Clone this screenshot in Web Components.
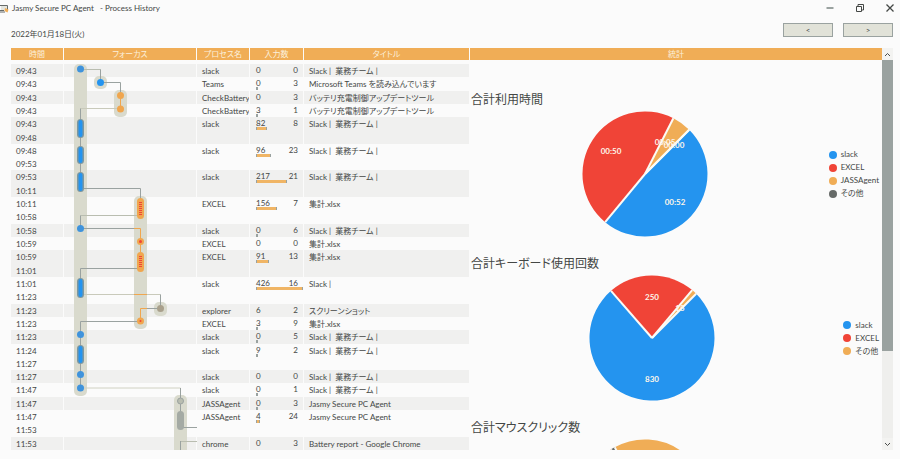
<!DOCTYPE html>
<html lang="ja">
<head>
<meta charset="utf-8">
<title>Jasmy Secure PC Agent - Process History</title>
<style>
html, body { margin: 0; height: 100%; }
body { background: #fbfbfb; color: #444745; font: 8px/14px Lato, "Noto Sans CJK JP", sans-serif; font-feature-settings: "palt"; overflow: hidden; }
</style>
</head>
<body>
<app-window>
  <title-bar slot="title">Jasmy Secure PC Agent &nbsp; - Process History</title-bar>
  <date-bar slot="tools">2022年01月18日(火)</date-bar>
  <history-table></history-table>
  <stats-panel heading="統計">
    <pie-section heading="合計利用時間" slices='[["slack","#2494ef",45,219.6],["EXCEL","#f04437",219.6,387],["JASSAgent","#f0ad56",387,405],["その他","#666a68",405,405]]' labels='[["00:50",29,43],["00:05",83,34],["00:00",92,37],["00:52",93,94]]'></pie-section>
    <pie-section heading="合計キーボード使用回数" slices='[["slack","#2494ef",45,319],["EXCEL","#f04437",319,400],["その他","#f0ad56",400,405]]' labels='[["250",63,25],["15",91,36],["830",63,107]]'></pie-section>
    <pie-section heading="合計マウスクリック数" slices='[["JASSAgent","#f0ad56",-29,100],["slack","#2494ef",100,240],["EXCEL","#f04437",240,327],["その他","#666a68",327,331]]' labels='[]'></pie-section>
  </stats-panel>
  <scroll-rail></scroll-rail>
</app-window>
<script>
const define = (name, html, setup) => customElements.define(name, class extends HTMLElement {
  connectedCallback() {
    if (this.shadowRoot) return;
    const root = this.attachShadow({ mode: "open" });
    const t = document.createElement("template");
    t.innerHTML = typeof html === "function" ? html(this) : html;
    root.append(t.content.cloneNode(true));
    if (setup) setup(this, root);
  }
});

define("app-window", `
<style>
:host { display: flex; flex-direction: column; height: 100vh; }
main { flex: 1; min-height: 0; display: grid; grid-template-columns: auto 1fr 11px; padding: 0 7px 9px 11px; }
</style>
<slot name="title"></slot><slot name="tools"></slot>
<main><slot></slot></main>`);

define("title-bar", `
<style>
:host { display: block; }
header { display: flex; align-items: center; height: 16px; padding-right: 4px; }
.logo { width: 9px; height: 9px; margin-right: 3px; }
h1 { font: inherit; margin: 0; flex: 1; }
nav { display: flex; gap: 18px; }
button { border: 0; background: none; padding: 0; width: 12px; height: 12px; display: grid; place-items: center; color: inherit; }
button svg { width: 10px; height: 10px; fill: none; stroke: currentColor; }
</style>
<header>
<svg class="logo" viewBox="0 0 9 9" aria-hidden="true"><path d="M0 1.5H7.5V6" fill="none" stroke="#666a68"/><path d="M1 2H7V6H1Z" fill="#e4e5de"/><path d="M0 8H5M0 6.5H4" stroke="#666a68"/><path d="M5 4L8.5 5.5L7.5 8.5L4.5 7Z" fill="#f0ad56"/></svg>
<h1><slot></slot></h1>
<nav>
<button aria-label="Minimize"><svg viewBox="0 0 10 10"><path d="M1.5 5H8.5" stroke="#9aa2a0" stroke-width="2"/></svg></button>
<button aria-label="Restore"><svg viewBox="0 0 10 10"><path d="M1.5 3.5H6.5V8.5H1.5ZM3 3V1.5H8.5V7H7"/></svg></button>
<button aria-label="Close"><svg viewBox="0 0 10 10"><path d="M1.5 1.5L8.5 8.5M8.5 1.5L1.5 8.5" stroke-width="1.3"/></svg></button>
</nav>
</header>`);

define("date-bar", `
<style>
:host { display: flex; justify-content: space-between; padding: 7px 7px 7px 11px; }
time { padding-top: 4px; }
div { display: flex; gap: 10px; }
button { box-sizing: border-box; width: 50px; height: 14px; padding: 0; border: 1px solid #9aa2a0; background: #e1e2d8; font: inherit; line-height: 12px; color: inherit; }
</style>
<time datetime="2022-01-18"><slot></slot></time>
<div><button aria-label="Previous day">&lt;</button><button aria-label="Next day">&gt;</button></div>`);

// [start, end, process, keys, clicks, title, bar width]
const S = "Slack |&nbsp; 業務チーム |", X = "集計.xlsx";
const rows = [
  ["09:43", "", "slack", 0, 0, S, 0],
  ["09:43", "", "Teams", 0, 3, "Microsoft Teams を読み込んでいます", 1],
  ["09:43", "", "CheckBatteryF", 0, 3, "バッテリ充電制御アップデートツール", 0],
  ["09:43", "", "CheckBatteryF", 3, 1, "バッテリ充電制御アップデートツール", 1],
  ["09:43", "09:48", "slack", 82, 8, S, 11],
  ["09:48", "09:53", "slack", 96, 23, S, 15],
  ["09:53", "10:11", "slack", 217, 21, S, 31],
  ["10:11", "10:58", "EXCEL", 156, 7, X, 21],
  ["10:58", "", "slack", 0, 6, S, 1],
  ["10:59", "", "EXCEL", 0, 0, X, 0],
  ["10:59", "11:01", "EXCEL", 91, 13, X, 13],
  ["11:01", "11:23", "slack", 426, 16, "Slack |", 47],
  ["11:23", "", "explorer", 6, 2, "スクリーンショット", 0],
  ["11:23", "", "EXCEL", 3, 9, X, 1],
  ["11:23", "", "slack", 0, 5, S, 1],
  ["11:24", "11:27", "slack", 9, 2, S, 1],
  ["11:27", "", "slack", 0, 0, S, 0],
  ["11:47", "", "slack", 0, 1, S, 1],
  ["11:47", "", "JASSAgent", 0, 3, "Jasmy Secure PC Agent", 1],
  ["11:47", "11:53", "JASSAgent", 4, 24, "Jasmy Secure PC Agent", 4],
  ["11:53", "", "chrome", 0, 3, "Battery report - Google Chrome", 0]
];

define("history-table", () => `
<style>
:host { display: block; position: relative; min-height: 0; }
table { display: flex; flex-direction: column; gap: 4px; height: 100%; }
thead { display: block; }
tr { display: grid; grid-template-columns: 52px 132px 52px 53px 165px; column-gap: 1px; padding-right: 1px; min-height: 0; }
th { background: #f0ad56; color: #fbf0dc; font-weight: 400; line-height: 12px; height: 12px; padding: 0; }
tbody { flex: 1; min-height: 0; display: grid; grid-template-rows: repeat(29, minmax(0, 1fr)); }
.long { grid-row: span 2; }
tbody tr:nth-child(odd) td { background: #f0f0ef; }
td { padding: 0 5px; white-space: nowrap; overflow: hidden; min-height: 0; line-height: 14px; }
.time { display: grid; grid-auto-rows: minmax(0, 1fr); }
.name { padding: 0 0 0 5px; }
.title { padding: 0 0 0 5px; }
.input { display: grid; grid-template-columns: 1fr auto; align-content: start; padding: 0 0 0 6px; line-height: 12px; }
.input span:nth-child(2) { padding-right: 5px; }
.bar { grid-column: 1 / -1; box-sizing: border-box; height: 3px; margin-top: -2px; background: #f0b565; border: solid #9aa2a0; border-width: 0 1px; }
focus-timeline { position: absolute; left: 53px; top: 16px; bottom: 0; width: 133px; }
</style>
<table>
<thead><tr><th>時間</th><th>フォーカス</th><th>プロセス名</th><th>入力数</th><th>タイトル</th></tr></thead>
<tbody>${rows.map(r => `<tr class="${r[1] ? "long" : ""}"><td class="time"><span>${r[0]}</span>${r[1] ? `<span>${r[1]}</span>` : ""}</td><td></td><td class="name">${r[2]}</td><td class="input"><span>${r[3]}</span><span>${r[4]}</span>${r[6] ? `<i class="bar" style="width:${r[6]}px"></i>` : ""}</td><td class="title">${r[5]}</td></tr>`).join("")}</tbody>
</table>
<focus-timeline></focus-timeline>`);

define("focus-timeline", () => {
  const band = (x, a, b) => `<rect x="${x - 6.5}" y="${a}" width="13" height="${b - a}" rx="5"/>`;
  const pill = (x, a, b, c) => `<rect x="${x - 3.5}" y="${a}" width="7" height="${b - a}" rx="3.5" fill="${c}"/>`;
  const core = (x, a, b, c) => `<path d="M${x} ${a + 4}V${b - 4}" stroke="${c}" stroke-width="3" stroke-dasharray="1 1"/>`;
  const B = "#3f93dc", O = "#f0a64e", G = "#9aa2a0";
  const line = (d, c = G) => `<path d="${d}" stroke="${c}"/>`;
  return `
<style>:host { display: block; } svg { display: block; width: 100%; height: 100%; }</style>
<svg viewBox="64 64 133 386" preserveAspectRatio="xMinYMin" aria-label="フォーカス">
<g fill="#d9dacd">${band(80.5, 64, 396)}${band(100.5, 76, 89)}${band(120.5, 90, 117)}${band(140.5, 196, 329)}${band(160.5, 302, 316)}${band(180.5, 395, 456)}</g>
<g fill="none" stroke-width="1">
${line("M84 69.5H100.5V82", "#b9bdb0")}${line("M100.5 69.5V82")}${line("M100.5 82.5H120.5V95")}${line("M120.5 95V109", O)}
${line("M120.5 108.5H80.5", "#c9cabb")}${line("M80.5 108.5V188")}
${line("M80.5 188.5H140.5V199")}${line("M140.5 215.5H80.5", "#b9bdb0")}${line("M80.5 215.5V228.5H134")}
${line("M134 228.5H140.5V255", O)}${line("M140.5 268.5H80.5V280")}
${line("M80.5 294.5H160.5", "#c9cabb")}${line("M134 294.5H147", O)}${line("M160.5 294.5V308.5H147")}${line("M147 308.5H140.5V321", O)}
${line("M140.5 321.5H80.5V388")}${line("M80.5 388H180.5", "#d0d1c2")}${line("M180.5 388V427.5H197")}${line("M180.5 450V441.5H197", "#b9bdb0")}${line("M180.5 441V450")}
</g>
${[69, 228.5, 334.5, 374.5, 388].map(y => `<circle cx="80.5" cy="${y}" r="3.5" fill="${B}"/>`).join("")}
<circle cx="100.5" cy="82.5" r="3.5" fill="#2494ef"/>
${[[120.5, 95.5], [120.5, 109], [140.5, 241.5], [140.5, 321]].map(p => `<circle cx="${p[0]}" cy="${p[1]}" r="3.5" fill="${O}"/>`).join("")}
<circle cx="140.5" cy="241.5" r="1.5" fill="#f04437"/><circle cx="140.5" cy="321" r="1" fill="#f04437"/>
<circle cx="160.5" cy="308.5" r="3.5" fill="#a9a08c"/><circle cx="180.5" cy="401" r="3" fill="#b9bdb0" stroke="${G}"/>
${[[119, 138], [146, 164], [172, 192], [278, 298], [345, 364]].map(p => pill(80.5, ...p, "#7d979f") + `<rect x="78.5" y="${p[0] + 1}" width="4" height="${p[1] - p[0] - 2}" rx="2" fill="#2494ef"/>` ).join("")}
${[[198, 219], [252, 272]].map(p => pill(140.5, ...p, O) + core(140.5, ...p, "#f04437")).join("")}
${pill(180.5, 411, 430, "#a4aaa4")}
</svg>`;
});

define("stats-panel", el => `
<style>
:host { display: block; min-width: 0; overflow: hidden; }
h2 { margin: 0 0 30px; font: inherit; line-height: 12px; height: 12px; text-align: center; background: #f0ad56; color: #fbf0dc; }
</style>
<h2>${el.getAttribute("heading")}</h2><slot></slot>`);

define("pie-section", el => {
  const slices = JSON.parse(el.getAttribute("slices")), labels = JSON.parse(el.getAttribute("labels"));
  const at = a => { const r = a * Math.PI / 180; return `${(63 + 62.5 * Math.sin(r)).toFixed(2)} ${(63 - 62.5 * Math.cos(r)).toFixed(2)}`; };
  return `
<style>
:host { display: block; margin-bottom: 17px; }
h3 { margin: 0 0 1px 1px; font-size: 12px; font-weight: 400; line-height: 20px; }
div { display: flex; align-items: center; padding-right: 3px; }
figure { flex: 1; margin: 0; display: flex; justify-content: center; }
svg { width: 126px; height: 126px; display: block; }
text { fill: #fdf6ea; font-weight: 700; text-anchor: middle; }
ul { list-style: none; margin: 0; padding: 0 0 0 9px; }
li { display: flex; align-items: center; gap: 4px; line-height: 13px; height: 13px; }
i { width: 8px; height: 8px; border-radius: 50%; }
</style>
<h3>${el.getAttribute("heading")}</h3>
<div><figure><svg viewBox="0 0 126 126">
${slices.filter(s => s[3] > s[2]).map(s => `<path d="M63 63L${at(s[2])}A62.5 62.5 0 ${s[3] - s[2] > 180 ? 1 : 0} 1 ${at(s[3])}Z" fill="${s[1]}"/>`).join("")}
${slices.map(s => `<path d="M63 63L${at(s[2])}" stroke="#fbfbf6" stroke-width="2"/>`).join("")}
${labels.map(l => `<text x="${l[1]}" y="${l[2]}">${l[0]}</text>`).join("")}
</svg></figure>
<ul>${slices.map(s => `<li><i style="background:${s[1]}"></i>${s[0]}</li>`).join("")}</ul></div>`;
});

define("scroll-rail", `
<style>
:host { display: flex; flex-direction: column; background: #efefed; }
button { border: 0; padding: 0; width: 11px; height: 12px; background: #f3f3f1; display: grid; place-items: center; }
svg { width: 7px; height: 7px; fill: none; stroke: #4a4d4b; }
.track { flex: 1; }
.thumb { height: 77%; background: #9aa2a0; }
</style>
<button aria-label="Scroll up"><svg viewBox="0 0 7 7"><path d="M1 5L3.5 2.5L6 5"/></svg></button>
<div class="track"><div class="thumb"></div></div>
<button aria-label="Scroll down"><svg viewBox="0 0 7 7"><path d="M1 2L3.5 4.5L6 2"/></svg></button>`);
</script>
</body>
</html>
